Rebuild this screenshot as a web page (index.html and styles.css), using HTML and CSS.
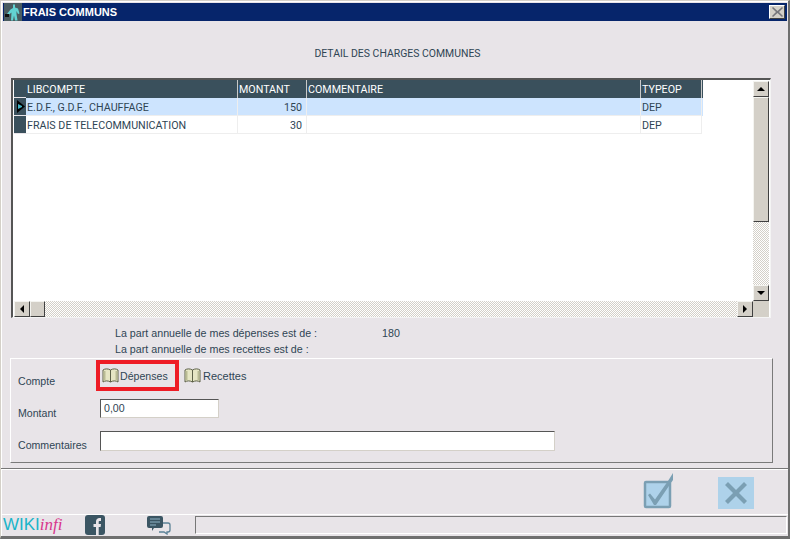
FILE: index.html
```html
<!DOCTYPE html>
<html lang="fr">
<head>
    <meta charset="UTF-8">
    <title>Frais communs</title>
    <link rel="stylesheet" href="styles.css">
</head>
<body>
    <div class="window">
        <div class="titlebar">
            <svg class="app-icon" width="18" height="18" viewBox="0 0 18 18">
                <rect width="18" height="18" fill="#4a5c60"/>
                <path d="M9 1.500h2v3l3 1 1.500 5-1.500.5-1.500-3v3l1 6.500H11l-1-5-1 5H7l.5-8-3 2.500-1.500-1 3.500-4.500L9 5z" fill="#62d3d3"/>
                <rect x="1" y="11" width="4" height="3" fill="#111"/>
            </svg>
            <span class="title">FRAIS COMMUNS</span>
            <button class="close-btn">
                <svg width="11" height="10" viewBox="0 0 11 10"><path d="M1 0l4.500 4 4.500-4 1 1-4 4 4 4-1 1-4.500-4-4.500 4-1-1 4-4-4-4z" fill="#77777c"/></svg>
            </button>
        </div>

        <h1 class="heading">DETAIL DES CHARGES COMMUNES</h1>

        <div class="grid-box">
            <div class="grid-top">
                <div class="grid-area">
                    <div class="row head">
                        <div class="ind"></div>
                        <div class="cell c1">LIBCOMPTE</div>
                        <div class="cell c2">MONTANT</div>
                        <div class="cell c3">COMMENTAIRE</div>
                        <div class="cell c4">TYPEOP</div>
                    </div>
                    <div class="row sel">
                        <div class="ind"><svg width="9" height="13" viewBox="0 0 9 13"><path d="M0 0l8 6.500-8 6.500z" fill="#000"/><path d="M1 9l4-2v-1l-4-2z" fill="#3fb3c4"/></svg></div>
                        <div class="cell c1">E.D.F., G.D.F., CHAUFFAGE</div>
                        <div class="cell c2 num">150</div>
                        <div class="cell c3"></div>
                        <div class="cell c4">DEP</div>
                    </div>
                    <div class="row">
                        <div class="ind"></div>
                        <div class="cell c1">FRAIS DE TELECOMMUNICATION</div>
                        <div class="cell c2 num">30</div>
                        <div class="cell c3"></div>
                        <div class="cell c4">DEP</div>
                    </div>
                </div>
                <div class="vscroll">
                    <div class="sbtn"><span class="arrow up"></span></div>
                    <div class="vthumb"></div>
                    <div class="track"></div>
                    <div class="sbtn"><span class="arrow down"></span></div>
                </div>
            </div>
            <div class="hscroll">
                <div class="sbtn"><span class="arrow left"></span></div>
                <div class="hthumb"></div>
                <div class="track"></div>
                <div class="sbtn"><span class="arrow right"></span></div>
                <div class="corner"></div>
            </div>
        </div>

        <div class="summary">
            <div class="sum-line"><span class="sum-label">La part annuelle de mes dépenses est de :</span><span>180</span></div>
            <div class="sum-line"><span class="sum-label">La part annuelle de mes recettes est de :</span></div>
        </div>

        <div class="panel">
            <div class="form-row compte">
                <span class="label">Compte</span>
                <div class="choice active">
                    <svg class="book" width="17" height="15" viewBox="0 0 17 15"><path d="M1 2c2-1.500 5-1.500 7.500 0 2.500-1.500 5.500-1.500 7.500 0v12c-2-1.500-5-1.500-7.500 0-2.500-1.500-5.500-1.500-7.500 0z" fill="#e6e6c4" stroke="#5d6148"/><path d="M8.500 2v12" stroke="#5d6148"/><path d="M2.500 3v9M14.500 3v9" stroke="#b9bb94" stroke-width="2"/></svg>
                    <span>Dépenses</span>
                </div>
                <div class="choice">
                    <svg class="book" width="17" height="15" viewBox="0 0 17 15"><path d="M1 2c2-1.500 5-1.500 7.500 0 2.500-1.500 5.500-1.500 7.500 0v12c-2-1.500-5-1.500-7.500 0-2.500-1.500-5.500-1.500-7.500 0z" fill="#e6e6c4" stroke="#5d6148"/><path d="M8.500 2v12" stroke="#5d6148"/><path d="M2.500 3v9M14.500 3v9" stroke="#b9bb94" stroke-width="2"/></svg>
                    <span>Recettes</span>
                </div>
            </div>
            <div class="form-row montant">
                <span class="label">Montant</span>
                <div class="field short">0,00</div>
            </div>
            <div class="form-row comment">
                <span class="label">Commentaires</span>
                <div class="field long"></div>
            </div>
        </div>

        <div class="actions">
            <svg class="ok-icon" width="32" height="37" viewBox="0 0 32 37">
                <rect x="2" y="10" width="25" height="25" rx="1" fill="#aed2ea" stroke="#7b9fb3" stroke-width="2.500"/>
                <path d="M5 23l2-1.500 5 6L25 9l5-8v7L13 33h-2z" fill="#7b9fb3"/>
            </svg>
            <div class="cancel-icon">
                <svg width="22" height="22" viewBox="0 0 22 22"><path d="M3 0l8 8 8-8 3 3-8 8 8 8-3 3-8-8-8 8-3-3 8-8-8-8z" fill="#7b9fb3"/></svg>
            </div>
        </div>

        <div class="statusbar">
            <div class="logo"><span class="wiki">WIKI</span><span class="infi">infi</span></div>
            <svg class="fb" width="20" height="20" viewBox="0 0 20 20"><rect width="20" height="20" rx="3" fill="#3b5563"/><path d="M11 20v-8H8.500V9H11V6.500C11 4.500 12.500 3 14.500 3H16v3h-1.300c-.7 0-1 .4-1 1v2H16l-.4 3h-1.900v8z" fill="#e8e4e8"/></svg>
            <svg class="chat" width="24" height="20" viewBox="0 0 24 20">
                <path d="M9 8h12a2 2 0 0 1 2 2v5a2 2 0 0 1-2 2h-1v2l-3-2h-5" fill="none" stroke="#5b8196" stroke-width="1.300"/>
                <path d="M2 1h12a2 2 0 0 1 2 2v8a2 2 0 0 1-2 2H7l-2 3v-3H2a2 2 0 0 1-2-2V3a2 2 0 0 1 2-2z" fill="#3b5563"/>
                <path d="M3 4h10M3 7h10M3 10h6" stroke="#8fb3c6" stroke-width="1"/>
            </svg>
            <div class="status-panel"></div>
        </div>
    </div>
</body>
</html>
```

FILE: styles.css
```css
* {
    box-sizing: border-box;
}

html, body {
    margin: 0;
    padding: 0;
}

body {
    width: 790px;
    height: 539px;
    overflow: hidden;
    font-family: "Liberation Sans", Arial, sans-serif;
    font-size: 10.6px;
    color: #2f4554;
}

.window {
    display: flex;
    flex-direction: column;
    width: 790px;
    height: 539px;
    padding: 3px 3px 0 3px;
    background: #e8e4e8;
    border-left: 1px solid #d4d0c8;
    border-top: 1px solid #d4d0c8;
    border-right: 2px solid #6f6f6f;
    border-bottom: 3px solid #6f6f6f;
    box-shadow: inset 1px 1px 0 #ffffff;
}

.titlebar {
    display: flex;
    align-items: center;
    flex: none;
    height: 18px;
    margin: -1px -2px 0 -1px;
    background: #06256b;
    color: #ffffff;
}

.app-icon {
    flex: none;
    margin-left: 1px;
}

.title {
    margin-left: 1px;
    font-size: 11px;
    font-weight: bold;
}

.close-btn {
    display: flex;
    align-items: center;
    justify-content: center;
    width: 16px;
    height: 14px;
    margin-left: auto;
    margin-right: 2px;
    padding: 0;
    background: #d4d0c8;
    border: 1px solid;
    border-color: #ffffff #404040 #404040 #ffffff;
}

.heading {
    flex: none;
    margin: 26px 0 0 0;
    padding-left: 6px;
    height: 13px;
    line-height: 13px;
    text-align: center;
    font-family: Roboto, "Liberation Sans", sans-serif;
    font-size: 10.45px;
    font-weight: normal;
}

.grid-box {
    flex: none;
    width: 760px;
    height: 240px;
    margin: 18px 0 0 7px;
    padding: 1px 1px 0 1px;
    background: #ffffff;
    border-top: 2px solid #555555;
    border-left: 2px solid #555555;
    border-right: 1px solid #f4f4f4;
    border-bottom: 1px solid #f4f4f4;
}

.grid-top {
    display: flex;
    height: 220px;
}

.grid-area {
    flex: 1;
    margin-top: -1px;
    font-family: Roboto, "Liberation Sans", sans-serif;
    font-size: 10.7px;
}

.row {
    display: flex;
    width: 689px;
    height: 18px;
    line-height: 19px;
    background: #ffffff;
}

.row.head {
    background: #3a505c;
    color: #ffffff;
}

.row.sel {
    background: #cde4fe;
}

.ind {
    display: flex;
    align-items: center;
    flex: none;
    width: 12px;
    padding-left: 3px;
    background: #3a505c;
    border-bottom: 1px solid #e8e4e8;
}

.cell {
    flex: none;
    padding: 0 1px;
    border-right: 1px solid #eeeeee;
    border-bottom: 1px solid #eeeeee;
    overflow: hidden;
    white-space: nowrap;
}

.head .cell {
    border-right: 1px solid #c9c9c9;
    border-bottom: 0;
}

.c1 {
    width: 212px;
}

.c2 {
    width: 69px;
}

.c3 {
    width: 334px;
}

.c4 {
    width: 61px;
}

.num {
    text-align: right;
    padding-right: 4px;
}

.vscroll {
    display: flex;
    flex-direction: column;
    flex: none;
    width: 16px;
}

.sbtn {
    display: flex;
    align-items: center;
    justify-content: center;
    flex: none;
    width: 16px;
    height: 16px;
    background: #d4d0c8;
    border: 1px solid;
    border-color: #f4f4f0 #404040 #404040 #f4f4f0;
}

.vthumb {
    flex: none;
    height: 125px;
    background: #d4d0c8;
    border: 1px solid;
    border-color: #f4f4f0 #404040 #404040 #f4f4f0;
}

.hthumb {
    flex: none;
    width: 15px;
    height: 16px;
    background: #d4d0c8;
    border: 1px solid;
    border-color: #f4f4f0 #404040 #404040 #f4f4f0;
}

.track {
    flex: 1;
    background-color: #f4f4f2;
    background-image: repeating-conic-gradient(#d4d0c8 0 25%, #ffffff 0 50%);
    background-size: 2px 2px;
}

.hscroll {
    display: flex;
    height: 16px;
}

.corner {
    flex: none;
    width: 16px;
    background: #d4d0c8;
}

.arrow {
    width: 0;
    height: 0;
    border-style: solid;
    border-color: transparent;
}

.arrow.up {
    border-width: 0 4px 4px 4px;
    border-bottom-color: #000000;
}

.arrow.down {
    border-width: 4px 4px 0 4px;
    border-top-color: #000000;
}

.arrow.left {
    border-width: 4px 4px 4px 0;
    border-right-color: #000000;
}

.arrow.right {
    border-width: 4px 0 4px 4px;
    border-left-color: #000000;
}

.summary {
    flex: none;
    margin: 7px 0 0 111px;
}

.sum-line {
    display: flex;
    height: 16px;
    line-height: 16px;
    font-size: 10.7px;
}

.sum-label {
    width: 267px;
}

.panel {
    flex: none;
    width: 763px;
    height: 105px;
    margin: 1px 0 0 6px;
    padding: 1px 0 0 7px;
    border-top: 1px solid #ffffff;
    border-left: 1px solid #ffffff;
    border-right: 1px solid #7a7a7a;
    border-bottom: 1px solid #7a7a7a;
}

.form-row {
    display: flex;
    align-items: center;
}

.label {
    width: 82px;
    flex: none;
}

.montant .label,
.comment .label {
    padding-top: 8px;
}

.compte {
    height: 31px;
}

.compte .label {
    padding-top: 11px;
    width: 78px;
}

.choice {
    display: flex;
    align-items: center;
    gap: 2px;
    height: 31px;
    width: 83px;
    font-size: 11px;
}

.choice.active {
    gap: 1px;
    font-size: 10.6px;
    border: 4px solid #ee1c25;
    padding-left: 2px;
    margin-right: 5px;
}

.montant {
    margin-top: 8px;
    height: 19px;
}

.comment {
    margin-top: 13px;
    height: 20px;
}

.field {
    height: 100%;
    padding: 0 3px;
    line-height: 17px;
    background: #ffffff;
    border-top: 1px solid #555555;
    border-left: 1px solid #555555;
    border-right: 1px solid #d4d0c8;
    border-bottom: 1px solid #d4d0c8;
}

.field.short {
    width: 119px;
}

.field.long {
    width: 455px;
}

.actions {
    display: flex;
    align-items: flex-end;
    flex: none;
    height: 46px;
    margin: 5px -3px 0 -3px;
    padding: 0 31px 5px 642px;
    gap: 43px;
    border-top: 1px solid #777777;
    box-shadow: inset 0 1px 0 #ffffff;
}

.ok-icon {
    flex: none;
}

.cancel-icon {
    display: flex;
    align-items: center;
    justify-content: center;
    flex: none;
    width: 36px;
    height: 32px;
    background: #aed2ea;
}

.statusbar {
    display: flex;
    align-items: center;
    flex: none;
    height: 21px;
    margin: 0 -3px;
    border-top: 1px solid #ffffff;
}

.logo {
    flex: none;
    width: 84px;
    padding-left: 2px;
    line-height: 20px;
    white-space: nowrap;
}

.wiki {
    font-size: 17px;
    color: #1ab5c8;
}

.infi {
    font-family: "Liberation Serif", serif;
    font-style: italic;
    font-size: 17px;
    color: #d8368c;
}

.fb {
    flex: none;
}

.chat {
    flex: none;
    margin-left: 42px;
}

.status-panel {
    flex: 1;
    height: 18px;
    margin-left: 24px;
    margin-right: 1px;
    border-top: 1px solid #777777;
    border-left: 1px solid #777777;
    border-right: 1px solid #ffffff;
    border-bottom: 1px solid #ffffff;
}
```
